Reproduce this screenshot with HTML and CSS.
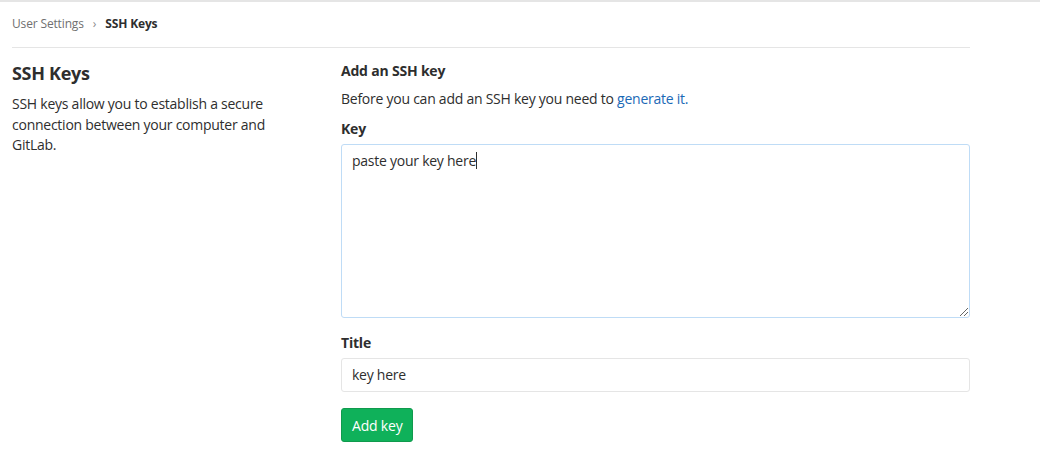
FILE: index.html
```html
<!DOCTYPE html>
<html>
<head>
<meta charset="utf-8">
<link rel="stylesheet" href="styles.css">
</head>
<body>
<div class="topline"></div>
<div class="container">
  <div class="breadcrumbs">
    <span class="crumb">User Settings</span>
    <span class="sep">›</span>
    <span class="crumb current">SSH Keys</span>
  </div>
  <div class="row">
    <div class="col-left">
      <h4 class="page-title">SSH Keys</h4>
      <p class="desc">SSH keys allow you to establish a secure connection between your computer and GitLab.</p>
    </div>
    <div class="col-right">
      <h5 class="section-title">Add an SSH key</h5>
      <p class="intro">Before you can add an SSH key you need to <a href="#" class="link">generate it.</a></p>
      <div class="form-group">
        <label class="label">Key</label>
        <div class="textarea">paste your key here<span class="caret"></span><span class="grip"></span></div>
      </div>
      <div class="form-group">
        <label class="label">Title</label>
        <div class="input">key here</div>
      </div>
      <button class="btn">Add key</button>
    </div>
  </div>
</div>
</body>
</html>
```
FILE: styles.css
```css
* { box-sizing: border-box; }
html, body { margin: 0; padding: 0; background: #fff; }
body {
  font-family: "Open Sans", "Noto Sans", sans-serif;
  font-size: 14px;
  color: #2e2e2e;
  line-height: 20px;
}
.topline { height: 2px; background: #e5e5e5; }
.container { width: 958px; margin-left: 12px; }
.breadcrumbs {
  height: 46px;
  border-bottom: 1px solid #e5e5e5;
  display: flex;
  align-items: center;
  font-size: 12px;
  letter-spacing: -0.15px;
  padding-bottom: 2px;
}
.crumb { color: #707070; }
.crumb.current { color: #2e2e2e; font-weight: 700; }
.sep { color: #8c8c8c; margin: 0 9px 0 9px; font-size: 12px; }
.row { display: flex; }
.col-left { width: 329px; padding-right: 50px; }
.col-right { flex: 1; }
.page-title {
  margin: 13px 0 0;
  font-size: 18px;
  line-height: 24px;
  font-weight: 700;
  letter-spacing: -0.3px;
}
.desc { margin: 9px 0 0; letter-spacing: -0.25px; line-height: 20.5px; }
.section-title {
  margin: 13px 0 0;
  font-size: 14px;
  line-height: 20px;
  font-weight: 700;
  letter-spacing: -0.2px;
}
.intro { margin: 8px 0 0; letter-spacing: -0.25px; }
.link { color: #1b69b6; text-decoration: none; }
.form-group { margin-top: 10px; }
.label { display: block; font-weight: 700; margin-bottom: 5px; letter-spacing: -0.2px; }
.textarea {
  position: relative;
  height: 174px;
  border: 1px solid #bfdcf6;
  border-radius: 3px;
  padding: 6px 10px;
  letter-spacing: -0.25px;
}
.caret { display: inline-block; width: 1px; height: 17px; background: #2e2e2e; vertical-align: -3px; }
.grip {
  position: absolute; right: 1px; bottom: 1px; width: 8px; height: 8px;
  background: linear-gradient(135deg, transparent 45%, #666 45%, #666 55%, transparent 55%, transparent 70%, #666 70%, #666 80%, transparent 80%);
}
.form-group + .form-group { margin-top: 15px; }
.input {
  height: 34px;
  border: 1px solid #e5e5e5;
  border-radius: 3px;
  padding: 6px 10px;
  letter-spacing: -0.25px;
}
.btn {
  margin-top: 16px;
  font-family: inherit;
  font-size: 14px;
  color: #fff;
  background: #0fb15a;
  border: 1px solid #109a4d;
  border-radius: 3px;
  height: 34px;
  padding: 0 10px;
  letter-spacing: -0.2px;
}
```
